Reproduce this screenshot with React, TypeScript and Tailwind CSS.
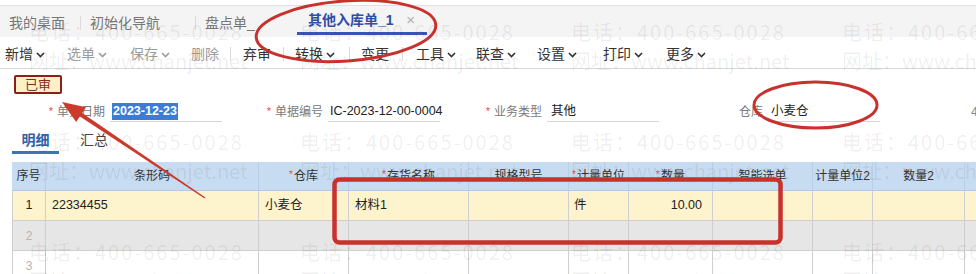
import React from 'react';

const Chevron: React.FC = () => (
  <svg width="9" height="6" viewBox="0 0 9 6" className="mt-[1px]">
    <path d="M1 1 L4.5 4.5 L8 1" fill="none" stroke="currentColor" strokeWidth="1.6" />
  </svg>
);

interface ToolItemProps {
  label: string;
  chevron?: boolean;
  muted?: boolean;
  className?: string;
}

const ToolItem: React.FC<ToolItemProps> = ({ label, chevron, muted, className }) => (
  <div
    className={`flex items-center gap-[3px] ${muted ? 'text-[#9c9c9c]' : 'text-[#333]'} ${className ?? ''}`}
  >
    <span>{label}</span>
    {chevron && <Chevron />}
  </div>
);

const Sep: React.FC = () => <span className="h-[14px] w-px bg-[#dadada]" />;

interface FieldProps {
  label: string;
  required?: boolean;
  className?: string;
  children?: React.ReactNode;
}

const Field: React.FC<FieldProps> = ({ label, required, className, children }) => (
  <div className={`flex items-end ${className ?? ''}`}>
    <div className="w-[64px] h-[21px] flex justify-end items-center pr-[5px] text-[12px] text-[#7a7a7a]">
      {required && <span className="text-[#e0534a] mr-[4px] text-[11px]">*</span>}
      <span>{label}</span>
    </div>
    <div className="w-[112px] h-[21px] border-b border-[#d6d6d6] flex items-center pl-[2px] text-[12.5px] text-[#222] whitespace-nowrap">
      {children}
    </div>
  </div>
);

const HeadCell: React.FC<{ label: string; required?: boolean }> = ({ label, required }) => (
  <div className="flex items-center justify-center border-r border-[#b9cfe8] text-[12px] text-[#333]">
    {required && <span className="text-[#e0534a] text-[10px] mr-[1px] -mt-[4px]">*</span>}
    {label}
  </div>
);

const cell = 'flex items-center border-r border-b border-[#cfcfcf] text-[12.5px] text-[#222]';

const Row: React.FC<{ no: string; bg: string; first?: boolean }> = ({ no, bg, first }) => (
  <div className={`grid grid-cols-[34px_213px_90px_120px_100px_60px_84px_100px_60px_92px_40px] h-[30px] ${bg}`}>
    <div
      className={`${cell} justify-center ${first ? '' : 'text-[#b5b5b5] text-[12px]'} border-l`}
    >
      {no}
    </div>
    <div className={`${cell} pl-[6px]`}>{first ? '22334455' : ''}</div>
    <div className={`${cell} pl-[6px]`}>{first ? '小麦仓' : ''}</div>
    <div className={`${cell} pl-[6px]`}>{first ? '材料1' : ''}</div>
    <div className={cell} />
    <div className={`${cell} pl-[5px]`}>{first ? '件' : ''}</div>
    <div className={`${cell} justify-end pr-[10px]`}>{first ? '10.00' : ''}</div>
    <div className={cell} />
    <div className={cell} />
    <div className={cell} />
    <div className={cell} />
  </div>
);

// faint company watermark tiled over the page
const Watermark: React.FC = () => (
  <div className="absolute left-0 top-0 pointer-events-none pl-[29px] pt-[17px] grid grid-cols-[271px_271px_271px_271px] text-[20px] text-black/[0.07] font-['Noto_Sans_CJK_SC',sans-serif] whitespace-nowrap">
    {Array.from({ length: 12 }).map((_, i) => (
      <div key={i} className="h-[110px] flex flex-col leading-[29px]">
        <span className="tracking-[2px]">电话：400-665-0028</span>
        <span>网址：www.chanjet.net</span>
      </div>
    ))}
  </div>
);

const Annotations: React.FC = () => (
  <svg
    className="absolute inset-0 pointer-events-none"
    width="976"
    height="274"
    viewBox="0 0 976 274"
  >
    <ellipse
      cx="346"
      cy="31"
      rx="90"
      ry="30"
      fill="none"
      stroke="#c8312c"
      strokeWidth="3"
      transform="rotate(-4 346 31)"
    />
    <ellipse cx="815.5" cy="105" rx="61.5" ry="23" fill="none" stroke="#c8312c" strokeWidth="3" />
    <rect
      x="334.5"
      y="179.5"
      width="446"
      height="63"
      rx="5"
      fill="none"
      stroke="#c8312c"
      strokeWidth="4.5"
    />
    <polygon points="81.4,112.6 205.4,197.4 204.6,198.6 79.2,116.0" fill="#cc3a2c" />
    <polygon points="62,102 86,107.2 76.2,122" fill="#cc3a2c" />
  </svg>
);

export default function App() {
  return (
    <div className="relative w-[976px] h-[274px] overflow-hidden bg-white font-['Liberation_Sans','Noto_Sans_CJK_SC',sans-serif]">
      <div className="h-[5px]" />

      {/* open pages */}
      <div className="h-[32px] pt-[3px] bg-[#f4f4f4] border-t border-[#e1e1e1] flex items-stretch text-[14px] text-[#777]">
        <div className="w-[80px] pl-[9px] flex items-center">我的桌面</div>
        <div className="flex items-center">
          <Sep />
        </div>
        <div className="w-[114px] pl-[9px] flex items-center">初始化导航</div>
        <div className="flex items-center">
          <Sep />
        </div>
        <div className="w-[101px] pl-[9px] flex items-center">盘点单_</div>
        <div className="w-[130px] mb-[2px] border-b-[3px] border-[#3a55b0] flex items-center pl-[11px]">
          <span className="font-bold text-[#2d4fa6]">其他入库单_1</span>
          <span className="ml-auto mr-[12px] text-[#b0b0b0] text-[15px]">×</span>
        </div>
      </div>

      {/* toolbar */}
      <div className="h-[32px] pt-[3px] border-b border-[#d9d9d9] flex items-center pl-[5px] text-[14px]">
        <ToolItem label="新增" chevron className="w-[62px]" />
        <ToolItem label="选单" chevron muted className="w-[63px]" />
        <ToolItem label="保存" chevron muted className="w-[61px]" />
        <ToolItem label="删除" muted className="w-[39px]" />
        <Sep />
        <ToolItem label="弃审" className="ml-[12px] w-[40px]" />
        <Sep />
        <ToolItem label="转换" chevron className="ml-[11px] w-[54px]" />
        <Sep />
        <ToolItem label="变更" className="ml-[11px] w-[41px]" />
        <Sep />
        <ToolItem label="工具" chevron className="ml-[13px] w-[60px]" />
        <ToolItem label="联查" chevron className="w-[61px]" />
        <ToolItem label="设置" chevron className="w-[66px]" />
        <ToolItem label="打印" chevron className="w-[63px]" />
        <ToolItem label="更多" chevron />
      </div>

      {/* status */}
      <div className="mt-[6px] ml-[14px] w-[48px] h-[19px] border-2 border-[#8c1f1a] rounded-[2px] bg-[#fdf0c6] flex items-center justify-center text-[13px] text-[#8c2a1a]">
        已审
      </div>

      {/* header fields */}
      <div className="mt-[7px] flex items-end">
        <Field label="单据日期" required className="ml-[46px]">
          <span className="bg-[#3a7cd6] text-white font-bold px-[1px] leading-[17px]">2023-12-23</span>
        </Field>
        <Field label="单据编号" required className="ml-[42px]">
          IC-2023-12-00-0004
        </Field>
        <Field label="业务类型" required className="ml-[43px]">
          <span className="pl-[2px]">其他</span>
        </Field>
        <Field label="仓库" className="ml-[45px]">
          <span className="pl-[1px]">小麦仓</span>
        </Field>
        <div className="ml-[91px] h-[21px] flex items-center text-[12px] text-[#888]">4</div>
      </div>

      {/* detail tabs */}
      <div className="mt-[7px] ml-[12px] h-[25px] flex items-stretch text-[14px]">
        <div className="w-[47px] border-b-[3px] border-[#3d74b8] flex items-center justify-center font-bold text-[#2f64a8]">
          明细
        </div>
        <div className="ml-[21px] pb-[3px] flex items-center text-[#444]">汇总</div>
      </div>

      {/* grid */}
      <div className="mt-[8px] ml-[12px]">
        <div className="grid grid-cols-[34px_213px_90px_120px_100px_60px_84px_100px_60px_92px_40px] h-[29px] bg-[#c7dbf1] border-b border-[#b3c8e2]">
          <HeadCell label="序号" />
          <HeadCell label="条形码" />
          <HeadCell label="仓库" required />
          <HeadCell label="存货名称" required />
          <HeadCell label="规格型号" />
          <HeadCell label="计量单位" required />
          <HeadCell label="数量" required />
          <HeadCell label="智能选单" />
          <HeadCell label="计量单位2" />
          <HeadCell label="数量2" />
          <HeadCell label="" />
        </div>
        <Row no="1" bg="bg-[#fdf3cd]" first />
        <Row no="2" bg="bg-[#e6e6e6]" />
        <Row no="3" bg="bg-white" />
      </div>

      <Watermark />
      <Annotations />
    </div>
  );
}
